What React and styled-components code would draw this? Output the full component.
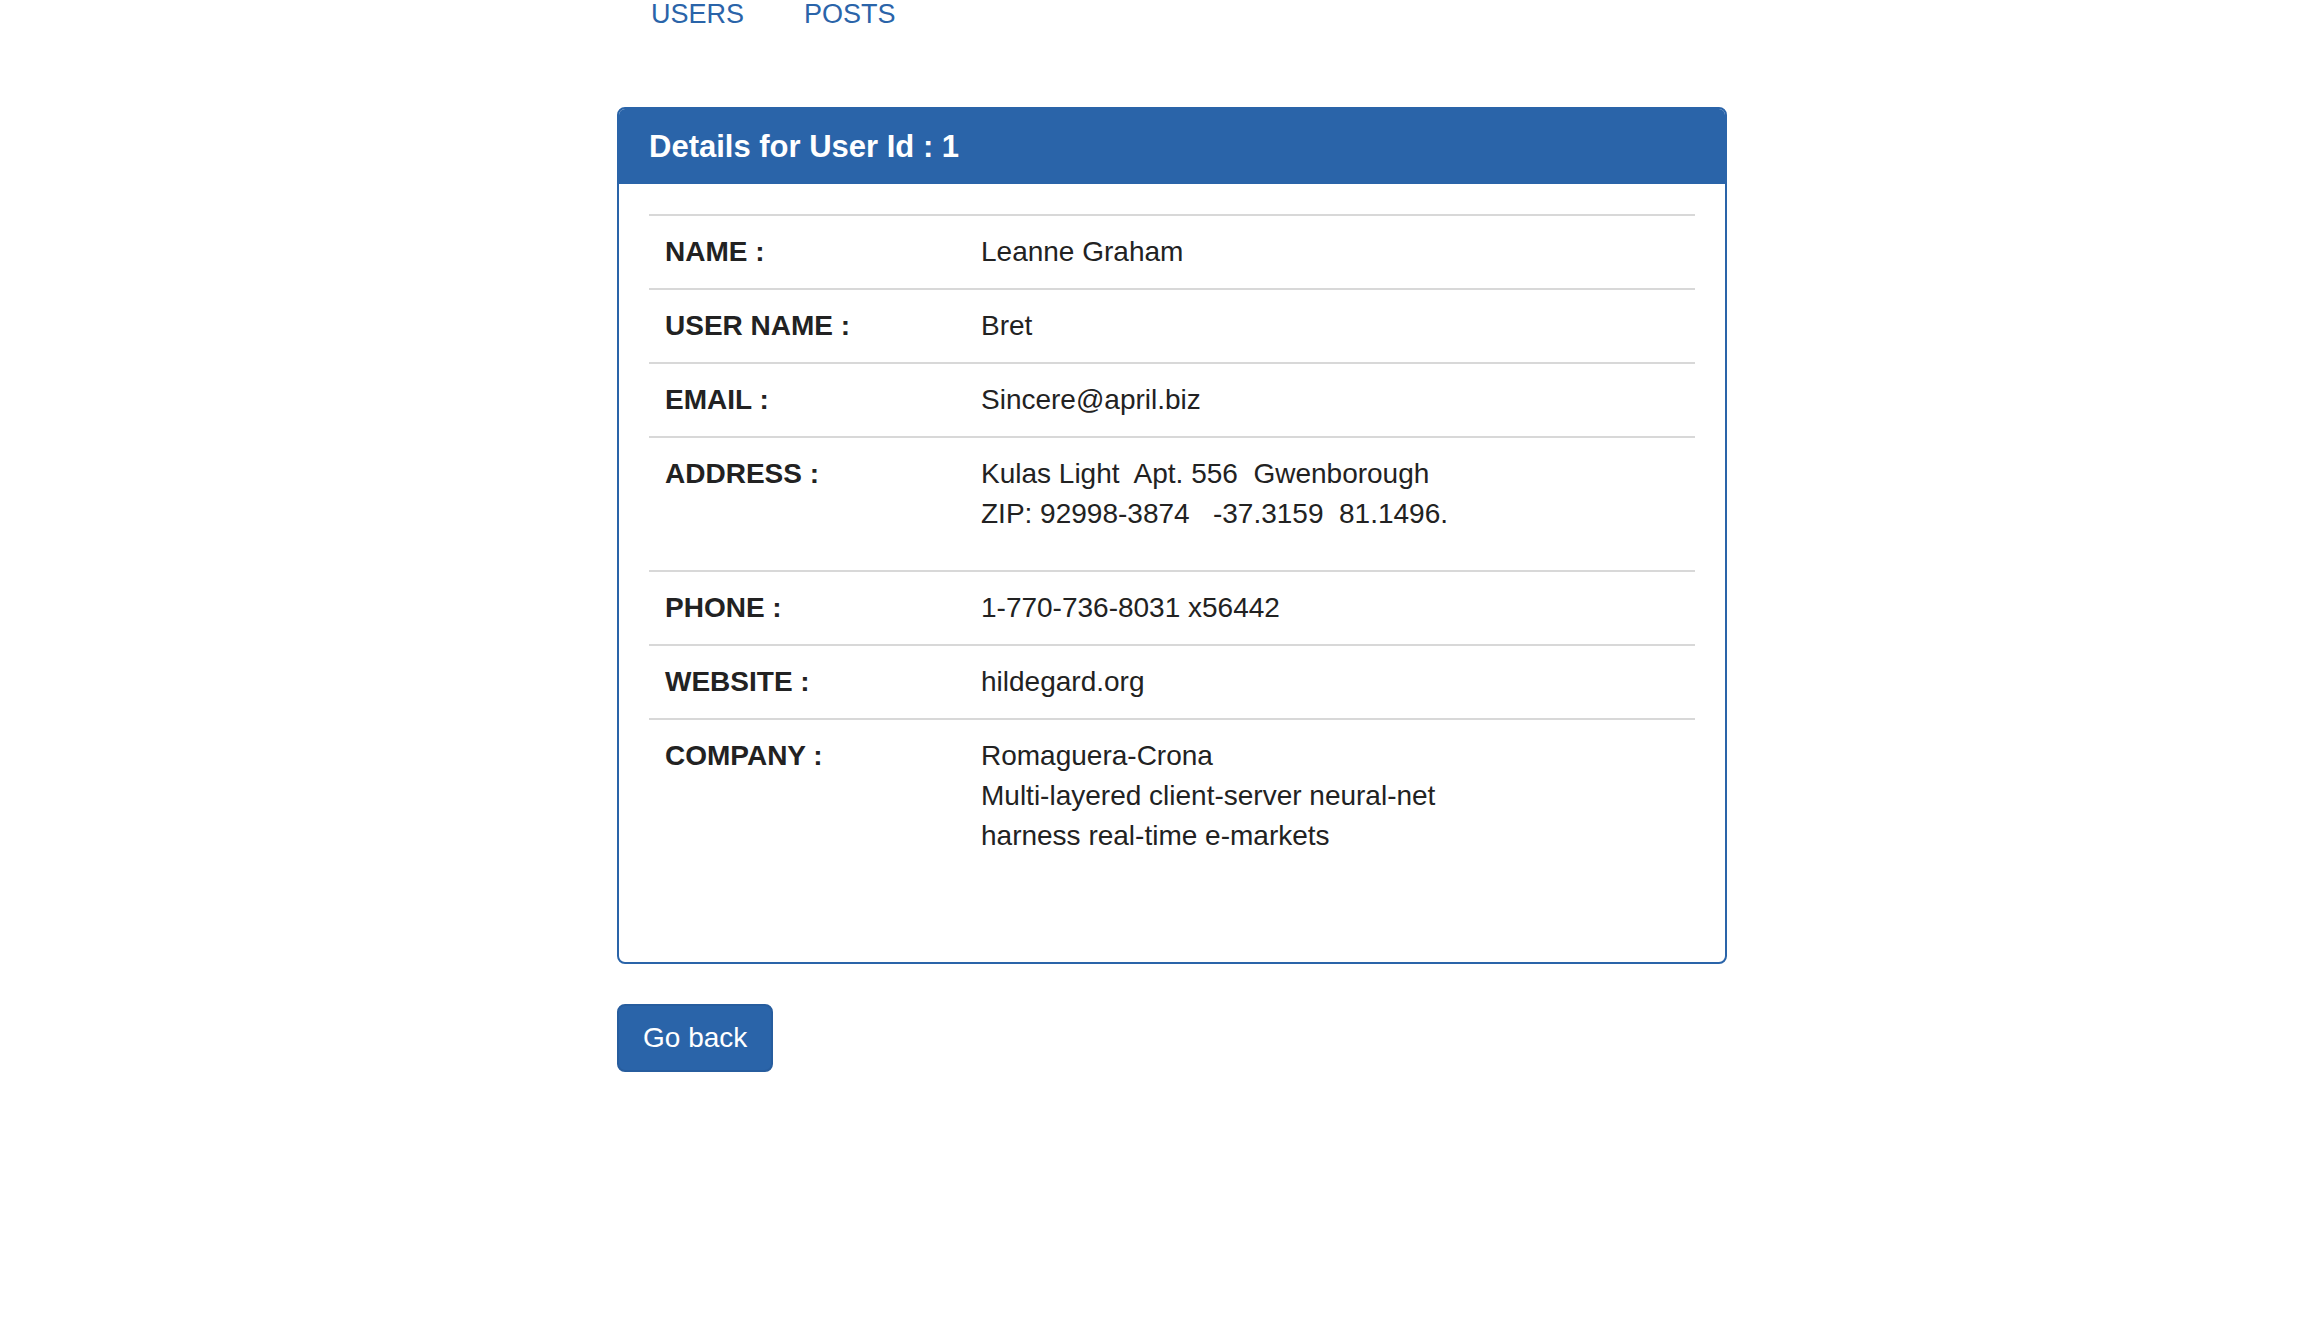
import React from 'react'
import styled, { createGlobalStyle } from 'styled-components'

const GlobalStyle = createGlobalStyle`
  body {
    margin: 0;
    background: #fff;
    font-family: "Liberation Sans", Arial, Helvetica, sans-serif;
    font-size: 28px;
    line-height: 40px;
    color: #222;
  }
`

const Page = styled.div`
  width: 1110px;
  margin-left: 617px;
`

const Nav = styled.ul`
  display: flex;
  list-style: none;
  margin: -6px 0 0;
  padding: 0 0 0 4px;
`

const NavLink = styled.a`
  display: block;
  padding: 0 30px;
  color: #2a64a9;
  font-size: 27px;
  text-decoration: none;
`

const Panel = styled.section`
  margin-top: 73px;
  border: 2px solid #2a64a9;
  border-radius: 8px;
  overflow: hidden;
`

const PanelHeading = styled.header`
  background: #2a64a9;
  padding: 20px 30px;
  color: #fff;
`

const PanelTitle = styled.h3`
  margin: 0;
  font-size: 31px;
  line-height: 35px;
  font-weight: 700;
`

const PanelBody = styled.div`
  padding: 30px;
`

const Table = styled.table`
  width: 100%;
  border-collapse: collapse;
  margin-bottom: 40px;
`

const Row = styled.tr`
  border-top: 2px solid #d8d8d8;
`

const Label = styled.th`
  width: 284px;
  padding: 16px;
  text-align: left;
  vertical-align: top;
  font-weight: 700;
`

const Value = styled.td`
  padding: 16px;
  vertical-align: top;
`

const Para = styled.p`
  margin: 0 0 20px;
`

const Button = styled.button`
  margin-top: 40px;
  padding: 12px 24px;
  border: 2px solid #275d9e;
  border-radius: 8px;
  background: #2a64a9;
  color: #fff;
  font-family: inherit;
  font-size: 28px;
  line-height: 40px;
  cursor: pointer;
`

const user = {
  id: 1,
  name: 'Leanne Graham',
  username: 'Bret',
  email: 'Sincere@april.biz',
  phone: '1-770-736-8031 x56442',
  website: 'hildegard.org',
}

const App = () => (
  <>
    <GlobalStyle />
    <Page>
      <Nav>
        <li><NavLink href="#">USERS</NavLink></li>
        <li><NavLink href="#">POSTS</NavLink></li>
      </Nav>
      <Panel>
        <PanelHeading>
          <PanelTitle>Details for User Id : {user.id}</PanelTitle>
        </PanelHeading>
        <PanelBody>
          <Table>
            <tbody>
              <Row><Label>NAME :</Label><Value>{user.name}</Value></Row>
              <Row><Label>USER NAME :</Label><Value>{user.username}</Value></Row>
              <Row><Label>EMAIL :</Label><Value>{user.email}</Value></Row>
              <Row>
                <Label>ADDRESS :</Label>
                <Value>
                  <Para>
                    Kulas Light&nbsp; Apt. 556&nbsp; Gwenborough<br />
                    ZIP: 92998-3874 &nbsp; -37.3159&nbsp; 81.1496.
                  </Para>
                </Value>
              </Row>
              <Row><Label>PHONE :</Label><Value>{user.phone}</Value></Row>
              <Row><Label>WEBSITE :</Label><Value>{user.website}</Value></Row>
              <Row>
                <Label>COMPANY :</Label>
                <Value>
                  <Para>
                    Romaguera-Crona<br />
                    Multi-layered client-server neural-net<br />
                    harness real-time e-markets
                  </Para>
                </Value>
              </Row>
            </tbody>
          </Table>
        </PanelBody>
      </Panel>
      <Button>Go back</Button>
    </Page>
  </>
)

export default App
